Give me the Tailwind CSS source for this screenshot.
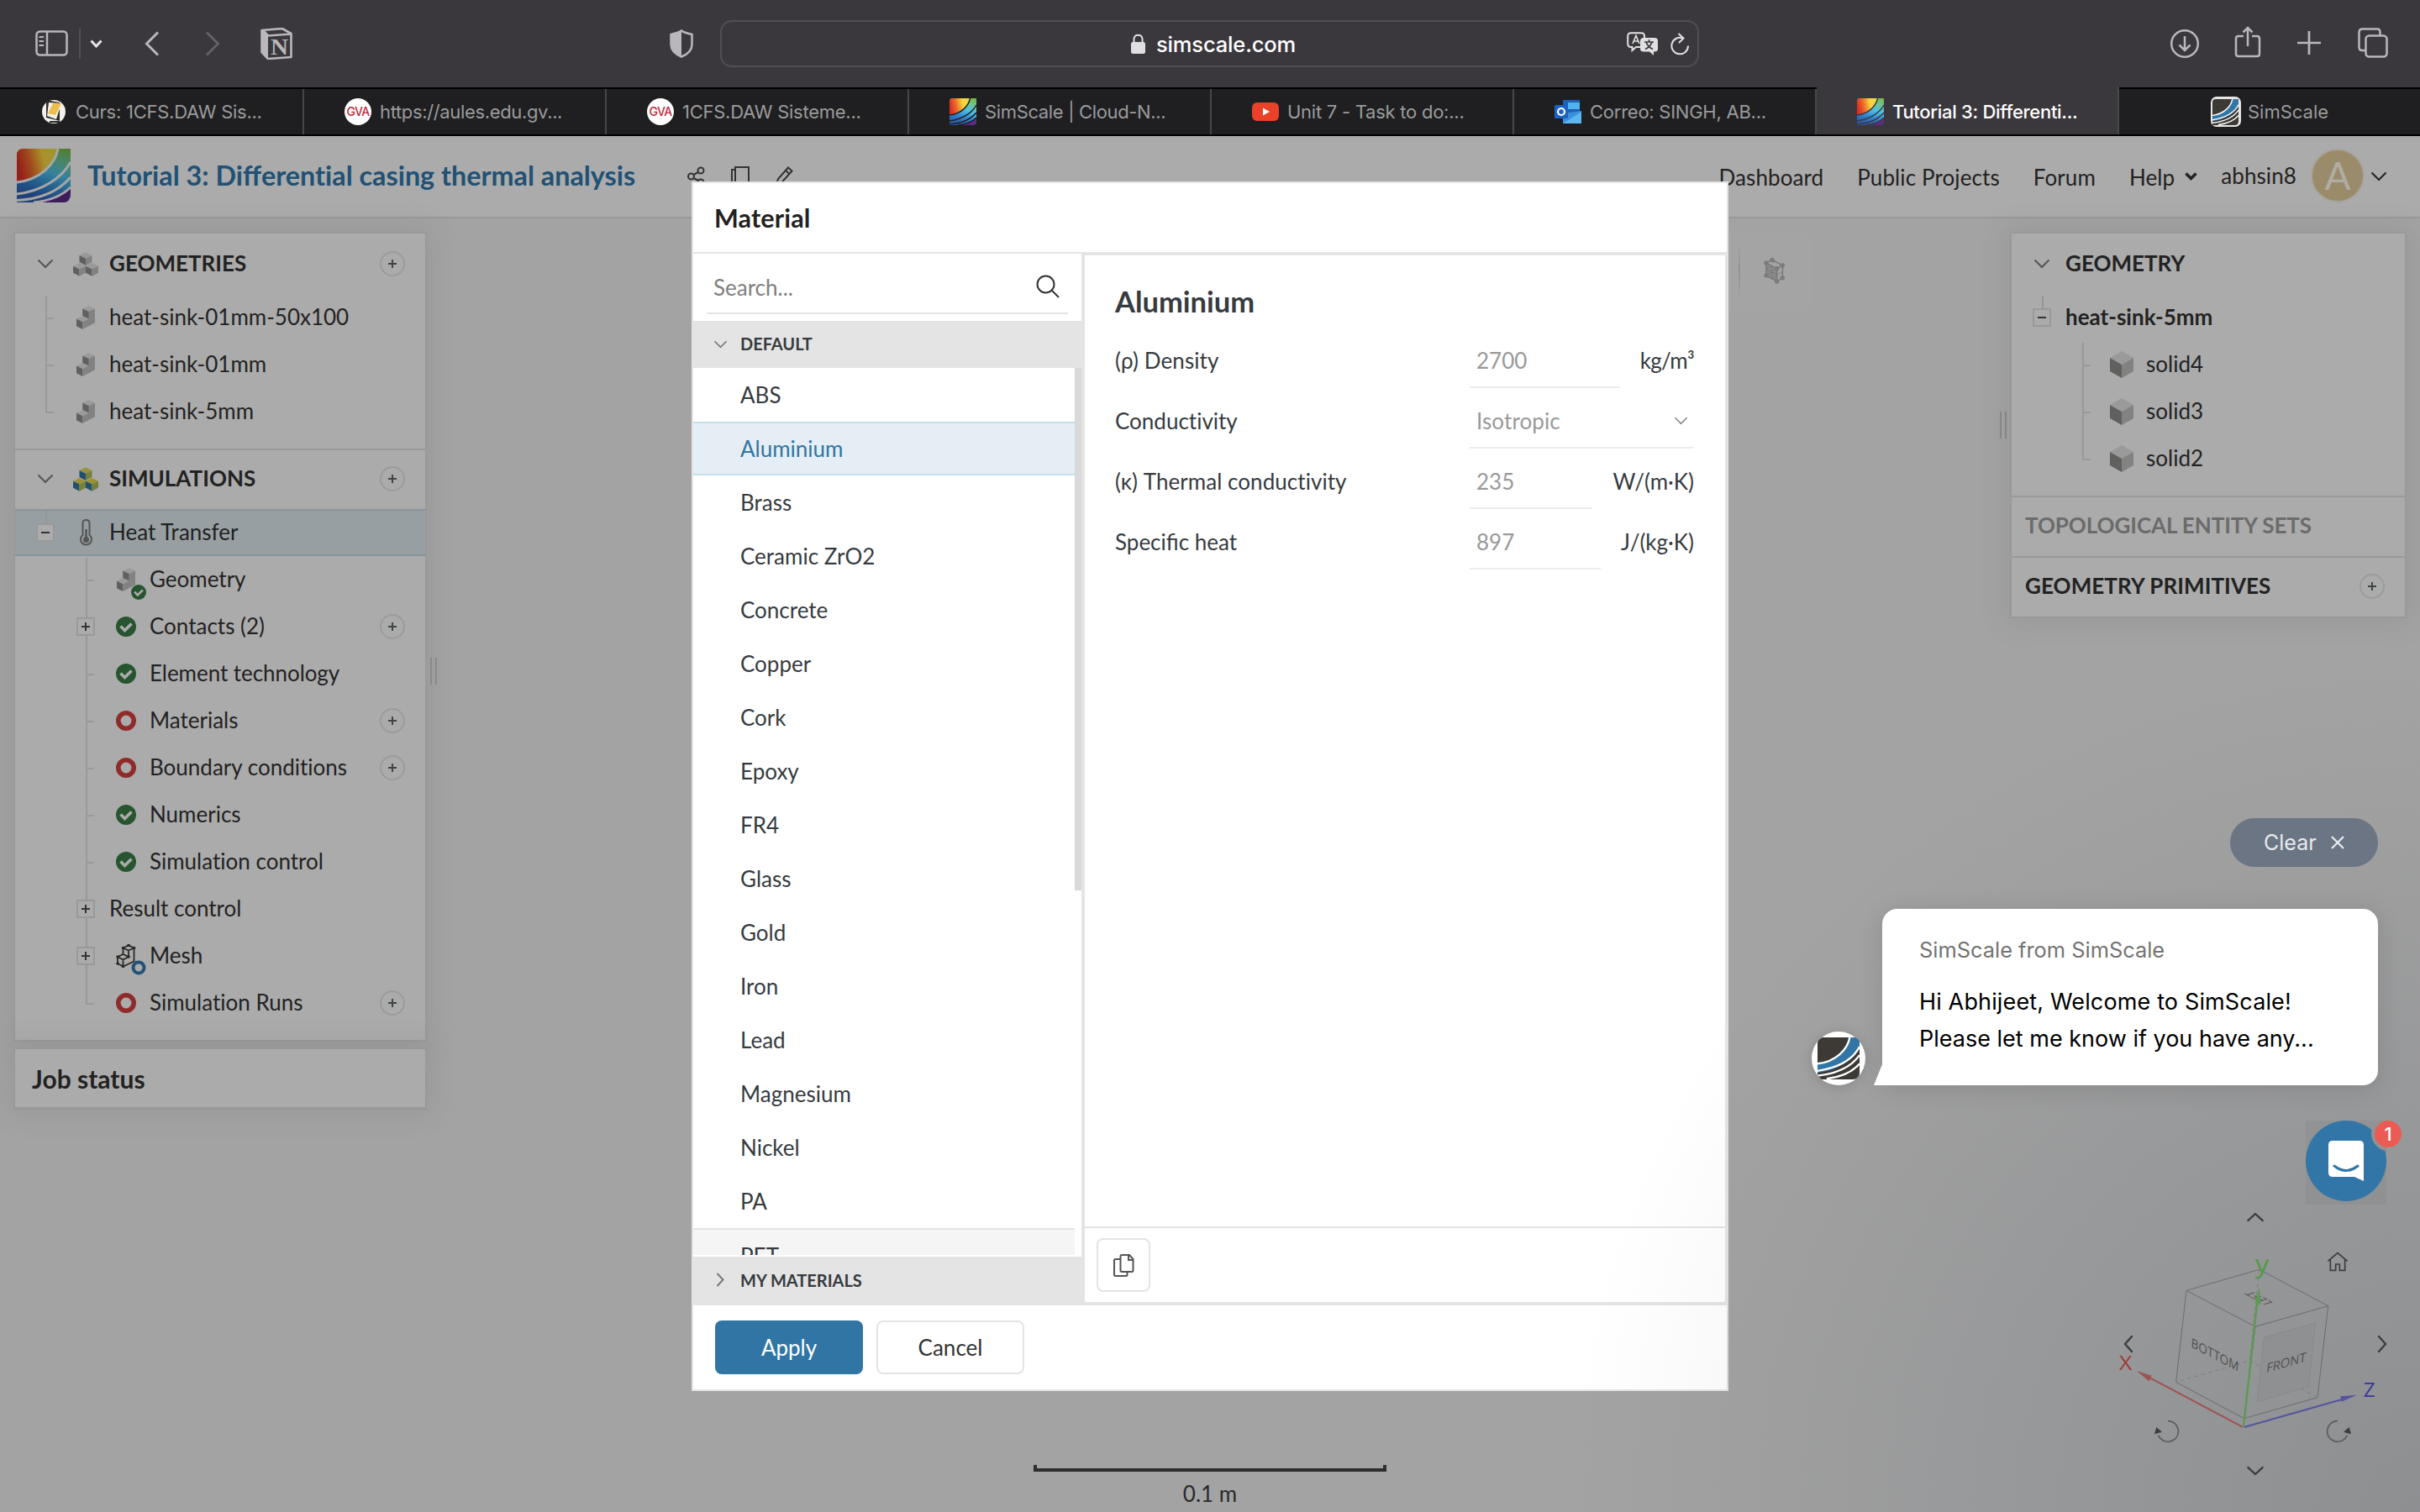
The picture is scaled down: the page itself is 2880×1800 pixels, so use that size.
<!DOCTYPE html>
<html lang="en">
<head>
<meta charset="utf-8">
<title>SimScale</title>
<script src="https://cdn.jsdelivr.net/npm/@tailwindcss/browser@4"></script>
</head>
<body class="w-[2880px] h-[1800px] overflow-hidden bg-[#a3a3a3] font-['Lato',sans-serif] text-[26px] leading-none text-[#222222] [font-variant-ligatures:none]">

<!-- Icon definitions -->
<svg width="0" height="0" class="absolute">
  <defs>
    <linearGradient id="warm" x1="0" y1="0.3" x2="1" y2="0.1"><stop offset="0" stop-color="#dc2f26"/><stop offset=".3" stop-color="#ec6f2a"/><stop offset=".62" stop-color="#f8d53f"/><stop offset="1" stop-color="#e9dc45"/></linearGradient>
    <linearGradient id="cool" x1="0.95" y1="0" x2="0.6" y2="1"><stop offset="0" stop-color="#79b83c"/><stop offset=".25" stop-color="#6cc59a"/><stop offset=".5" stop-color="#4cbfe8"/><stop offset=".8" stop-color="#2f7fc8"/><stop offset="1" stop-color="#2f5fb0"/></linearGradient>
    <clipPath id="logoclip"><path d="M8 0H64V54Q64 64 54 64H0V8Q0 0 8 0Z"/></clipPath>
    <symbol id="rainbow" viewBox="0 0 64 64"><g clip-path="url(#logoclip)"><rect width="64" height="64" fill="url(#cool)"/><path d="M0 0H49C46 18 28 37 0 40Z" fill="url(#warm)"/><path d="M64 46V64H20C40 62 54 56 64 46Z" fill="#5d2a86"/></g>
      <g fill="none" stroke="currentColor" stroke-width="3"><path d="M49 0C46 18 28 37 0 40"/><path d="M64 16C54 34 32 50 0 54"/><path d="M64 34C52 48 32 60 0 61.500"/><path d="M64 46C54 56 40 62 20 64"/></g></symbol>
    <symbol id="darklogo" viewBox="0 0 64 64"><path d="M8 0H64V54Q64 64 54 64H0V8Q0 0 8 0Z" fill="#3d3935"/><path d="M49 0H64V14C54 34 32 50 0 54V40C28 37 46 18 49 0Z" fill="#3276a8"/>
      <g fill="none" stroke="#fff" stroke-width="3"><path d="M49 0C46 18 28 37 0 40"/><path d="M64 14C54 34 32 46 0 51"/><path d="M64 27C52 44 32 55 0 58.500"/><path d="M64 40C54 52 38 60 14 63"/></g></symbol>
    <symbol id="chev" viewBox="0 0 20 12"><path d="M1.500 1.500L10 10L18.500 1.500" fill="none" stroke="currentColor" stroke-width="2"/></symbol>
    <symbol id="cubes3" viewBox="0 0 86 82">
      <g id="c1"><path d="M43 0L64.500 11L43 22L21.500 11Z" class="fill-[#999]"/><path d="M21.500 11L43 22V45L21.500 34Z" class="fill-[#60605e]"/><path d="M64.500 11L43 22V45L64.500 34Z" class="fill-[#828282]"/></g>
      <use href="#c1" x="-21.500" y="36.500"/><use href="#c1" x="21.500" y="36.500"/></symbol>
    <symbol id="cubes3c" viewBox="0 0 86 82">
      <g id="c2"><path d="M43 0L64.500 11L43 22L21.500 11Z" fill="#9a923b"/><path d="M21.500 11L43 22V45L21.500 34Z" fill="#22506f"/><path d="M64.500 11L43 22V45L64.500 34Z" fill="#75813a"/></g>
      <use href="#c2" x="-21.500" y="36.500"/><use href="#c2" x="21.500" y="36.500"/></symbol>
    <symbol id="part" viewBox="0 0 64 81"><path d="M21 10L43 0L64 10L43 20Z" fill="#9b9b9b"/><path d="M0 45L21 35L43 45L21 56Z" fill="#9b9b9b"/><path d="M21 10L43 20V45L21 35Z" fill="#60605e"/><path d="M0 45L21 56V81L0 70Z" fill="#60605e"/><path d="M43 20L64 10V59L21 81V56L43 45Z" fill="#828282"/></symbol>
    <symbol id="solid" viewBox="0 0 84 96"><path d="M42 0L84 24L42 48L0 24Z" fill="#9a9a9a"/><path d="M0 24L42 48V96L0 72Z" fill="#60605e"/><path d="M84 24L42 48V96L84 72Z" fill="#828282"/></symbol>
    <symbol id="ok" viewBox="0 0 24 24"><circle cx="12" cy="12" r="12" fill="#26552f"/><path d="M5.500 11.500L10.500 16.500L18.500 8.500" fill="none" stroke="#ababab" stroke-width="3.600"/></symbol>
    <symbol id="ring" viewBox="0 0 24 24"><circle cx="12" cy="12" r="9.200" fill="none" stroke="currentColor" stroke-width="5.600"/></symbol>
    <symbol id="plus" viewBox="0 0 30 30"><circle cx="15" cy="15" r="14" fill="none" stroke="#999b9d" stroke-width="2"/><path d="M15 10V20M10 15H20" stroke="#3f4447" stroke-width="2"/></symbol>
    <symbol id="tee" viewBox="0 0 24 56"><path d="M12 0V56M12 29H21" stroke="#999" stroke-width="2" fill="none"/></symbol>
    <symbol id="tee1" viewBox="0 0 24 56"><path d="M12 2V56M12 29H21" stroke="#999" stroke-width="2" fill="none"/></symbol>
    <symbol id="ell" viewBox="0 0 24 56"><path d="M12 0V29H21" stroke="#999" stroke-width="2" fill="none"/></symbol>
    <symbol id="boxplus" viewBox="0 0 24 56"><path d="M12 0V56" stroke="#999" stroke-width="2"/><rect x="1" y="18" width="20" height="20" fill="#ababab" stroke="#999" stroke-width="2"/><path d="M11 23V33M6 28H16" stroke="#333" stroke-width="2"/></symbol>
    <symbol id="boxminus" viewBox="0 0 24 56"><path d="M12 2V18" stroke="#8f979b" stroke-width="2"/><rect x="1" y="18" width="20" height="20" fill="#ababab" stroke="#999" stroke-width="2"/><path d="M6 28H16" stroke="#333" stroke-width="2"/></symbol>
  </defs>
</svg>

<div class="flex h-[1800px] w-[2880px] flex-col">

  <!-- Browser toolbar -->
  <div class="flex h-[104px] shrink-0 items-center bg-[#3b383d] text-[#b9b7bb]">
    <svg class="ml-[42px] h-[32px] w-[40px]" viewBox="0 0 40 32" fill="none" stroke="currentColor" stroke-width="2.500"><rect x="1.500" y="1.500" width="36" height="28" rx="4"/><path d="M14 1.500V29.500"/><path d="M4.500 8H10M4.500 13H10M4.500 18H10" stroke-width="2"/></svg>
    <div class="ml-[12px] h-[36px] w-[2px] bg-[#515054]"></div>
    <svg class="ml-[11px] h-[10px] w-[15px] text-[#e4e3e5]" viewBox="0 0 15 10"><path d="M1.500 1.500L7.500 8L13.500 1.500" fill="none" stroke="currentColor" stroke-width="3"/></svg>
    <svg class="ml-[50px] h-[30px] w-[18px]" viewBox="0 0 18 30"><path d="M16 1.500L2.500 15L16 28.500" fill="none" stroke="currentColor" stroke-width="3"/></svg>
    <svg class="ml-[54px] h-[30px] w-[18px] text-[#636165]" viewBox="0 0 18 30"><path d="M2 1.500L15.500 15L2 28.500" fill="none" stroke="currentColor" stroke-width="3"/></svg>
    <svg class="ml-[48px] h-[38px] w-[38px]" viewBox="0 0 38 38"><path d="M1.500 3L26 1L36.500 7V35L9 37L1.500 29Z" fill="none" stroke="currentColor" stroke-width="2.600" stroke-linejoin="round"/><path d="M1.500 3L9 9.500V37L1.500 29Z" fill="currentColor"/><path d="M3 3L9 9.500L36.500 7.500" fill="none" stroke="currentColor" stroke-width="2.600"/><text x="12" y="32" font-family="Liberation Serif, serif" font-weight="700" font-size="27" textLength="21" lengthAdjust="spacingAndGlyphs" fill="currentColor">N</text></svg>
    <svg class="ml-[448px] h-[34px] w-[30px]" viewBox="0 0 30 34"><path d="M15 1.500C18 4 23 5 27.500 6V18C27.500 25 21 30 15 32.500C9 30 2.500 25 2.500 18V6C7 5 12 4 15 1.500Z" fill="none" stroke="currentColor" stroke-width="2.500"/><path d="M15 1.500V32.500C9 30 2.500 25 2.500 18V6C7 5 12 4 15 1.500Z" fill="currentColor"/></svg>
    <div class="ml-[31px] flex h-[56px] w-[1165px] items-center rounded-[14px] border-2 border-[#504e53] font-['Inter',sans-serif] text-white">
      <svg class="ml-[487px] h-[24px] w-[17px] text-[#e0dfe1]" viewBox="0 0 17 24"><rect x="0" y="10" width="17" height="14" rx="2.500" fill="currentColor"/><path d="M3.500 11V6.500C3.500 0 13.500 0 13.500 6.500V11" fill="none" stroke="currentColor" stroke-width="2"/></svg>
      <span class="ml-[13px] w-[165px] pt-[1px] text-[25.500px] font-medium tracking-[-0.15px] whitespace-nowrap">simscale.com</span>
      <svg class="ml-[395px] h-[28px] w-[38px] text-[#e0dfe1]" viewBox="0 0 38 28"><path d="M5 1.200H17Q21 1.200 21 5V14Q21 18 17 18H11L6.500 22V18H5Q1.200 18 1.200 14V5Q1.200 1.200 5 1.200Z" fill="none" stroke="currentColor" stroke-width="2"/><path d="M20 7H33Q37 7 37 11V20Q37 23.500 33 23.500H32V28L27 23.500H20Q16 23.500 16 20V11Q16 7 20 7Z" fill="currentColor"/><path d="M7 14L11 4.500L15 14M8.500 11H13.500" fill="none" stroke="currentColor" stroke-width="1.700"/><path d="M21 12H32M26.500 9V12M23 12Q25 18 31 20.500M30 12Q28 18 22 20.500" fill="none" stroke="#3b383d" stroke-width="1.700"/></svg>
      <svg class="ml-[14px] h-[27px] w-[23px] text-[#e0dfe1]" viewBox="0 0 23 27" fill="none" stroke="currentColor" stroke-width="2"><path d="M15 6.500A9.800 9.800 0 1 0 21 15.500"/><path d="M9.500 1L15.500 6.500L10 12"/></svg>
    </div>
    <div class="ml-[560px] flex items-center">
      <svg class="h-[36px] w-[36px]" viewBox="0 0 36 36" fill="none" stroke="currentColor" stroke-width="2.500"><circle cx="18" cy="18" r="15.800"/><path d="M18 9V26M11.500 19.500L18 26L24.500 19.500"/></svg>
      <svg class="-mt-[4px] ml-[41px] h-[38px] w-[32px]" viewBox="0 0 32 38" fill="none" stroke="currentColor" stroke-width="2.500"><path d="M11 12H5Q2 12 2 15V33Q2 36 5 36H27Q30 36 30 33V15Q30 12 27 12H21"/><path d="M16 24V2M10.500 7.500L16 2L21.500 7.500"/></svg>
      <svg class="-mt-[2px] ml-[43px] h-[28px] w-[28px]" viewBox="0 0 28 28"><path d="M14 0V28M0 14H28" stroke="currentColor" stroke-width="2.700"/></svg>
      <svg class="-mt-[2px] ml-[43px] h-[36px] w-[38px]" viewBox="0 0 38 36" fill="none" stroke="currentColor" stroke-width="2.500"><rect x="10.500" y="9.500" width="25" height="25" rx="4"/><path d="M10 27H6Q2.500 27 2.500 23V5.500Q2.500 1.500 6.500 1.500H24Q27.500 1.500 27.500 5.500V9"/></svg>
    </div>
  </div>

  <!-- Tab strip -->
  <div class="flex h-[58px] shrink-0 border-t-2 border-b-2 border-black bg-[#1f1f21] font-['Inter',sans-serif] text-[22px] tracking-[-0.25px] text-[#9b9b9c]">
    <div class="flex w-[362px] items-center border-r-2 border-[#47474a] pl-[49px] whitespace-nowrap">
      <svg class="h-[30px] w-[30px]" viewBox="0 0 30 30"><circle cx="15" cy="15" r="14" fill="#f3f1ea"/><path d="M6 1L22 4V26L6 22Z" fill="#2c2b2b"/><path d="M9 4L24 5L18 24L7 20Z" fill="#f3f1ea"/><path d="M14 5L24 5L17 19L8 17Z" fill="#ecbf4d"/><path d="M10 27H22" stroke="#2c2b2b" stroke-width="2"/></svg>
      <span class="ml-[11px]">Curs: 1CFS.DAW Sis...</span></div>
    <div class="flex w-[360px] items-center border-r-2 border-[#47474a] pl-[48px] whitespace-nowrap">
      <span class="flex h-[32px] w-[32px] items-center justify-center rounded-full bg-white text-[14px] font-medium tracking-[-0.6px] text-[#c2293c]">GVA</span>
      <span class="ml-[10px] tracking-[-0.35px]">https://aules.edu.gv...</span></div>
    <div class="flex w-[360px] items-center border-r-2 border-[#47474a] pl-[48px] whitespace-nowrap">
      <span class="flex h-[32px] w-[32px] items-center justify-center rounded-full bg-white text-[14px] font-medium tracking-[-0.6px] text-[#c2293c]">GVA</span>
      <span class="ml-[10px]">1CFS.DAW Sisteme...</span></div>
    <div class="flex w-[360px] items-center border-r-2 border-[#47474a] pl-[48px] whitespace-nowrap">
      <svg class="h-[32px] w-[32px] text-[#1f1f21]"><use href="#rainbow"/></svg>
      <span class="ml-[10px] tracking-[-0.35px]">SimScale | Cloud-N...</span></div>
    <div class="flex w-[360px] items-center border-r-2 border-[#47474a] pl-[48px] whitespace-nowrap">
      <svg class="h-[32px] w-[32px]" viewBox="0 0 32 32"><rect y="5" width="32" height="22" rx="6" fill="#ea4128"/><path d="M13 11.500L21 16L13 20.500Z" fill="#fff"/></svg>
      <span class="ml-[10px]">Unit 7 - Task to do:...</span></div>
    <div class="flex w-[360px] items-center border-r-2 border-[#47474a] pl-[48px] whitespace-nowrap">
      <svg class="h-[32px] w-[32px]" viewBox="0 0 32 32"><rect x="10" y="2" width="20" height="22" fill="#1d5fb5"/><rect x="16" y="5" width="14" height="8" fill="#4fb3ef"/><path d="M10 18L32 15V30H10Z" fill="#3b8fdd"/><path d="M10 30L32 16V30Z" fill="#5cb6f0"/><rect y="8" width="16" height="16" rx="1.500" fill="#1c62c4"/><circle cx="8" cy="16" r="4" fill="none" stroke="#fff" stroke-width="2.200"/></svg>
      <span class="ml-[10px]">Correo: SINGH, AB...</span></div>
    <div class="-mt-[2px] flex w-[360px] items-center border-r-2 border-[#47474a] bg-[#3b383d] pt-[2px] pl-[48px] whitespace-nowrap">
      <svg class="h-[32px] w-[32px] text-[#3b383d]"><use href="#rainbow"/></svg>
      <span class="ml-[10px] font-medium tracking-[-0.3px] text-white">Tutorial 3: Differenti...</span></div>
    <div class="flex w-[358px] items-center justify-center whitespace-nowrap">
      <span class="flex h-[36px] w-[36px] items-center justify-center rounded-[7px] bg-[#e6e6e6]"><svg class="h-[31px] w-[31px]"><use href="#darklogo"/></svg></span>
      <span class="ml-[8px] tracking-normal">SimScale</span></div>
  </div>

  <!-- Application -->
  <div class="relative flex grow flex-col">
    <header class="flex h-[98px] shrink-0 items-center border-b-2 border-[#999999] bg-[#ababab] pb-[2px]">
      <svg class="ml-[20px] h-[64px] w-[64px] text-[#f4f4f4] brightness-[0.68]"><use href="#rainbow"/></svg>
      <span class="ml-[20px] w-[653px] text-[32.300px] font-bold whitespace-nowrap text-[#215174]">Tutorial 3: Di<span class="[font-variant-ligatures:normal]">ff</span>erential casing thermal analysis</span>
      <div class="mt-[2px] ml-[61px] flex items-center gap-[30px] text-[#333]">
        <svg class="h-[24px] w-[22px]" viewBox="0 0 22 24" fill="none" stroke="currentColor" stroke-width="2"><circle cx="4.500" cy="12" r="3.500"/><circle cx="16" cy="5" r="3.500"/><circle cx="16" cy="19" r="3.500"/><path d="M7.500 10L13 7M7.500 14L13 17"/></svg>
        <svg class="h-[24px] w-[22px]" viewBox="0 0 22 24" fill="none" stroke="currentColor" stroke-width="2"><path d="M5 1H21V19H5ZM5 4H1V23H16V19"/></svg>
        <svg class="h-[24px] w-[22px]" viewBox="0 0 22 24" fill="none" stroke="currentColor" stroke-width="2"><path d="M2 22L4 15L16 1.500L20.500 5.500L8 19.500ZM13 5L17.500 9"/></svg>
      </div>
      <nav class="ml-auto flex items-center tracking-[0.1px]">
        <span class="pt-[3px]">Dashboard</span><span class="ml-[40px] pt-[3px]">Public Projects</span><span class="ml-[40px] pt-[3px]">Forum</span><span class="ml-[40px] pt-[3px]">Help</span>
        <svg class="mt-[2px] ml-[12px] h-[10px] w-[15px]" viewBox="0 0 15 10"><path d="M1.500 1.500L7.500 7.500L13.500 1.500" fill="none" stroke="currentColor" stroke-width="3.500"/></svg>
        <span class="ml-[28px]">abhsin8</span>
        <span class="ml-[17px] flex h-[64px] w-[64px] items-center justify-center rounded-full border-2 border-[#a7a49c] bg-[#9a8c6a] text-[46px] text-[#b0aca3]">A</span>
        <svg class="mt-[2px] mr-[39px] ml-[7px] h-[12px] w-[20px]"><use href="#chev"/></svg>
      </nav>
    </header>

    <main class="flex grow items-start justify-between px-[16px] pt-[16px]">
      <!-- Left sidebar -->
      <div class="flex items-center">
        <div class="flex flex-col gap-[7px]">
          <section class="h-[964px] w-[492px] border-2 border-[#999999] bg-[#ababab] shadow-[0_0_36px_8px_rgba(0,0,0,0.06)] [&_span]:-translate-x-px [&_span]:-translate-y-px">
            <div class="flex h-[72px] items-center pl-[26px]"><svg class="h-[12px] w-[20px] text-[#555]"><use href="#chev"/></svg><svg class="ml-[23px] h-[29px] w-[30px]"><use href="#cubes3"/></svg><span class="ml-[14px] font-bold">GEOMETRIES</span><svg class="mr-[24px] ml-auto h-[30px] w-[30px]"><use href="#plus"/></svg></div>
            <div class="flex h-[56px] items-center pl-[25px]"><svg class="h-[56px] w-[24px]"><use href="#tee1"/></svg><svg class="ml-[24px] h-[28px] w-[22px]"><use href="#part"/></svg><span class="ml-[18px]">heat-sink-01mm-50x100</span></div>
            <div class="flex h-[56px] items-center pl-[25px]"><svg class="h-[56px] w-[24px]"><use href="#tee"/></svg><svg class="ml-[24px] h-[28px] w-[22px]"><use href="#part"/></svg><span class="ml-[18px]">heat-sink-01mm</span></div>
            <div class="flex h-[56px] items-center pl-[25px]"><svg class="h-[56px] w-[24px]"><use href="#ell"/></svg><svg class="ml-[24px] h-[28px] w-[22px]"><use href="#part"/></svg><span class="ml-[18px]">heat-sink-5mm</span></div>
            <div class="mt-[16px] flex h-[72px] items-center border-t-2 border-[#999999] pb-[2px] pl-[26px]"><svg class="h-[12px] w-[20px] text-[#555]"><use href="#chev"/></svg><svg class="ml-[23px] h-[29px] w-[30px]"><use href="#cubes3c"/></svg><span class="ml-[14px] font-bold">SIMULATIONS</span><svg class="mr-[24px] ml-auto h-[30px] w-[30px]"><use href="#plus"/></svg></div>
            <div class="flex h-[56px] items-center border-y-2 border-[#85959c] bg-[#979fa2] pl-[25px]"><svg class="-my-[2px] h-[56px] w-[24px]"><use href="#boxminus"/></svg>
              <svg class="ml-[28px] h-[32px] w-[15px]" viewBox="0 0 15 32"><path d="M3.500 19V5Q3.500 1 7.500 1T11.500 5V19A6.500 6.500 0 1 1 3.500 19Z" fill="none" stroke="#555" stroke-width="2"/><circle cx="7.500" cy="24.500" r="3.500" fill="#555"/><path d="M7.500 12V24" stroke="#555" stroke-width="2.500"/></svg>
              <span class="ml-[21px]">Heat Transfer</span></div>
            <div class="flex h-[56px] items-center pl-[73px]"><svg class="h-[56px] w-[24px]"><use href="#tee1"/></svg><div class="relative ml-[24px] h-[28px] w-[22px]"><svg class="h-[28px] w-[22px]"><use href="#part"/></svg><svg class="absolute top-[20px] left-[17px] h-[18px] w-[18px]"><use href="#ok"/></svg></div><span class="ml-[18px]">Geometry</span></div>
            <div class="flex h-[56px] items-center pl-[73px]"><svg class="h-[56px] w-[24px]"><use href="#boxplus"/></svg><svg class="ml-[23px] h-[24px] w-[24px]"><use href="#ok"/></svg><span class="ml-[17px]">Contacts (2)</span><svg class="mr-[24px] ml-auto h-[30px] w-[30px]"><use href="#plus"/></svg></div>
            <div class="flex h-[56px] items-center pl-[73px]"><svg class="h-[56px] w-[24px]"><use href="#tee"/></svg><svg class="ml-[23px] h-[24px] w-[24px]"><use href="#ok"/></svg><span class="ml-[17px] tracking-[-0.05px]">Element technology</span></div>
            <div class="flex h-[56px] items-center pl-[73px]"><svg class="h-[56px] w-[24px]"><use href="#tee"/></svg><svg class="ml-[23px] h-[24px] w-[24px] text-[#8f2b2b]"><use href="#ring"/></svg><span class="ml-[17px]">Materials</span><svg class="mr-[24px] ml-auto h-[30px] w-[30px]"><use href="#plus"/></svg></div>
            <div class="flex h-[56px] items-center pl-[73px]"><svg class="h-[56px] w-[24px]"><use href="#tee"/></svg><svg class="ml-[23px] h-[24px] w-[24px] text-[#8f2b2b]"><use href="#ring"/></svg><span class="ml-[17px]">Boundary conditions</span><svg class="mr-[24px] ml-auto h-[30px] w-[30px]"><use href="#plus"/></svg></div>
            <div class="flex h-[56px] items-center pl-[73px]"><svg class="h-[56px] w-[24px]"><use href="#tee"/></svg><svg class="ml-[23px] h-[24px] w-[24px]"><use href="#ok"/></svg><span class="ml-[17px]">Numerics</span></div>
            <div class="flex h-[56px] items-center pl-[73px]"><svg class="h-[56px] w-[24px]"><use href="#tee"/></svg><svg class="ml-[23px] h-[24px] w-[24px]"><use href="#ok"/></svg><span class="ml-[17px]">Simulation control</span></div>
            <div class="flex h-[56px] items-center pl-[73px]"><svg class="h-[56px] w-[24px]"><use href="#boxplus"/></svg><span class="ml-[16px]">Result control</span></div>
            <div class="flex h-[56px] items-center pl-[73px]"><svg class="h-[56px] w-[24px]"><use href="#boxplus"/></svg>
              <div class="relative ml-[23px] h-[28px] w-[24px]"><svg class="h-[28px] w-[24px]" viewBox="0 0 24 28" fill="none" stroke="#2a2926" stroke-width="1.800"><path d="M8.500 4.500L15 1.500L21.500 4.500L15 7.500ZM8.500 4.500V12M15 7.500V15M21.500 4.500V20.500L8.500 26.500L2 23V15L8.500 12L15 15L8.500 18.500L2 15M8.500 18.500V26.500"/><path d="M8.500 4.500h.1M15 1.500h.1M21.500 4.500h.1M2 15h.1M2 23h.1M8.500 26.500h.1M15 15h.1" stroke-width="3.600" stroke-linecap="round"/></svg>
              <svg class="absolute top-[19px] left-[18px] h-[18px] w-[18px] text-[#22527a]" viewBox="0 0 18 18"><circle cx="9" cy="9" r="6.500" fill="#ababab" stroke="currentColor" stroke-width="4"/></svg></div><span class="ml-[17px]">Mesh</span></div>
            <div class="flex h-[56px] items-center pl-[73px]"><svg class="h-[56px] w-[24px]"><use href="#ell"/></svg><svg class="ml-[23px] h-[24px] w-[24px] text-[#8f2b2b]"><use href="#ring"/></svg><span class="ml-[17px]">Simulation Runs</span><svg class="mr-[24px] ml-auto h-[30px] w-[30px]"><use href="#plus"/></svg></div>
          </section>
          <section class="flex h-[75px] w-[492px] items-center border-2 border-b-4 border-[#999999] bg-[#ababab] pl-[20px] text-[30px] font-bold shadow-[0_0_36px_8px_rgba(0,0,0,0.06)]">Job status</section>
        </div>
        <div class="ml-[4px] h-[32px] w-[8px] border-x-2 border-[#8a8a8a]"></div>
      </div>

      <!-- Right sidebar -->
      <div class="flex items-center">
        <div class="mr-[4px] h-[32px] w-[8px] border-x-2 border-[#8a8a8a]"></div>
        <section class="h-[460px] w-[472px] border-2 border-[#999999] bg-[#ababab] shadow-[0_0_36px_8px_rgba(0,0,0,0.06)] [&_span]:-translate-y-px">
          <div class="flex h-[72px] items-center pl-[26px]"><svg class="h-[12px] w-[20px] text-[#555]"><use href="#chev"/></svg><span class="ml-[18px] font-bold">GEOMETRY</span></div>
          <div class="flex h-[56px] items-center pl-[25px]"><svg class="h-[56px] w-[24px]"><use href="#boxminus"/></svg><span class="ml-[15px] font-bold">heat-sink-5mm</span></div>
          <div class="flex h-[56px] items-center pl-[73px]"><svg class="h-[56px] w-[24px]"><use href="#tee1"/></svg><svg class="ml-[20px] h-[32px] w-[28px]"><use href="#solid"/></svg><span class="ml-[15px]">solid4</span></div>
          <div class="flex h-[56px] items-center pl-[73px]"><svg class="h-[56px] w-[24px]"><use href="#tee"/></svg><svg class="ml-[20px] h-[32px] w-[28px]"><use href="#solid"/></svg><span class="ml-[15px]">solid3</span></div>
          <div class="flex h-[56px] items-center pl-[73px]"><svg class="h-[56px] w-[24px]"><use href="#ell"/></svg><svg class="ml-[20px] h-[32px] w-[28px]"><use href="#solid"/></svg><span class="ml-[15px]">solid2</span></div>
          <div class="mt-[16px] flex h-[72px] items-center border-t-2 border-[#999999] pb-[2px] pl-[16px] font-bold text-[#6b6b6b]"><span class="tracking-[-0.08px]">TOPOLOGICAL ENTITY SETS</span></div>
          <div class="flex h-[72px] items-center border-t-2 border-[#999999] pb-[2px] pl-[16px] font-bold"><span class="tracking-[0.08px]">GEOMETRY PRIMITIVES</span><svg class="mr-[24px] ml-auto h-[30px] w-[30px]"><use href="#plus"/></svg></div>
        </section>
      </div>
    </main>
  </div>
</div>

<!-- Viewer toolbar -->
<div class="absolute top-[276px] left-[2040px] flex h-[94px] w-[117px] items-center rounded-[10px] bg-[#a4a4a4] pl-[29px]">
  <div class="h-[68px] w-[2px] bg-linear-to-b from-[#a4a4a4] via-[#919191] to-[#a4a4a4]"></div>
  <svg class="-mt-[3px] ml-[26px] h-[34px] w-[28px] text-[#7b7b7b]" viewBox="0 0 84 102" fill="none" stroke="currentColor" stroke-width="5"><path d="M15 24L53 44V90L15 69Z" fill="#8c8c8c"/><path d="M15 24L36 13L73 33L53 44M73 33V77L53 90"/><path d="M34 34V80M15 46L53 67M15 69L53 44M15 46L34 34M34 80L53 67M53 67L73 55M36 24L50 17" stroke-width="3"/><g fill="currentColor" stroke="none"><circle cx="15" cy="24" r="8"/><circle cx="36" cy="13" r="8"/><circle cx="73" cy="33" r="8"/><circle cx="53" cy="44" r="8"/><circle cx="15" cy="69" r="8"/><circle cx="53" cy="90" r="8"/><circle cx="73" cy="77" r="8"/></g></svg>
</div>

<!-- Scale bar -->
<div class="absolute top-[1744px] left-[1230px] flex w-[420px] flex-col items-center">
  <div class="h-[8px] w-full border-x-4 border-b-4 border-[#2e2e2e]"></div>
  <span class="mt-[13px] text-[#2a2a2a]">0.1 m</span>
</div>

<!-- Material dialog -->
<div class="absolute top-[216px] left-[823px] flex h-[1440px] w-[1234px] flex-col border-2 border-[#e4e4e4] bg-white text-[#363b3f]">
  <div class="flex h-[84px] shrink-0 items-center border-b-2 border-[#e4e4e4] pl-[25px] text-[30.500px] font-bold tracking-[0.15px] text-[#222]">Material</div>
  <div class="flex h-[1252px] shrink-0">
    <div class="flex w-[462px] flex-col">
      <div class="mx-[16px] flex h-[72px] shrink-0 items-center border-b-2 border-[#e4e4e4] pl-[8px] text-[#808080]"><span class="pt-[10px]">Search...</span>
        <svg class="mr-[10px] ml-auto mt-[8px] h-[28px] w-[28px]" viewBox="0 0 28 28" fill="none" stroke="#333" stroke-width="2"><circle cx="11.500" cy="11.500" r="10"/><path d="M18.500 18.500L27 27"/></svg></div>
      <div class="mt-[8px] flex h-[56px] shrink-0 items-center bg-[#e4e4e4] pl-[24px] text-[20px] font-bold"><svg class="h-[10px] w-[17px] text-[#777]"><use href="#chev"/></svg><span class="ml-[15px] -translate-y-px">DEFAULT</span></div>
      <div class="flex h-[1056px] shrink-0 justify-between overflow-hidden">
        <div class="w-[454px] *:flex *:h-[64px] *:items-center *:pb-[1px] *:pl-[56px]">
          <div>ABS</div>
          <div class="border-y-2 border-[#c2dfeb] bg-[#e4eef4] text-[#3175a5]">Aluminium</div>
          <div>Brass</div><div>Ceramic ZrO2</div><div>Concrete</div><div>Copper</div><div>Cork</div><div>Epoxy</div><div>FR4</div><div>Glass</div><div>Gold</div><div>Iron</div><div>Lead</div><div>Magnesium</div><div>Nickel</div><div>PA</div>
          <div class="border-t-2 border-[#e4e4e4] bg-[#f5f5f5]">PET</div>
        </div>
        <div class="h-[622px] w-[8px] bg-[#d9d9d9]"></div>
      </div>
      <div class="flex h-[60px] shrink-0 items-center border-t-2 border-white bg-[#e4e4e4] pb-[3px] pl-[27px] text-[20px] font-bold"><svg class="h-[17px] w-[10px] text-[#777]" viewBox="0 0 10 17"><path d="M1.500 1L8.500 8.500L1.500 16" fill="none" stroke="currentColor" stroke-width="2"/></svg><span class="ml-[19px]">MY MATERIALS</span></div>
    </div>
    <div class="flex w-[768px] flex-col border-2 border-b-4 border-l-4 border-[#e4e4e4]">
      <div class="grow pr-[37px] pl-[36px]">
        <h2 class="mt-[35px] mb-[19px] text-[34.500px] leading-[40px] font-bold">Aluminium</h2>
        <div class="flex h-[72px] items-start"><span class="w-[422px] pt-[18px] tracking-[0.1px]">(ρ) Density</span><span class="h-[64px] grow border-b-2 border-[#ececec] pt-[18px] pl-[8px] text-[#999]">2700</span><span class="ml-[24px] pt-[18px] tracking-[-0.7px]">kg/m³</span></div>
        <div class="flex h-[72px] items-start"><span class="w-[422px] pt-[18px]">Conductivity</span><span class="flex h-[64px] grow justify-between border-b-2 border-[#ececec] pt-[18px] pr-[7px] pl-[8px] tracking-[0.1px] text-[#999]">Isotropic<svg class="mt-[8px] h-[10px] w-[17px] text-[#888]"><use href="#chev"/></svg></span></div>
        <div class="flex h-[72px] items-start"><span class="w-[422px] pt-[18px] tracking-[0.05px]">(κ) Thermal conductivity</span><span class="h-[64px] grow border-b-2 border-[#ececec] pt-[18px] pl-[8px] text-[#999]">235</span><span class="ml-[25px] pt-[18px]">W/(m·K)</span></div>
        <div class="flex h-[72px] items-start"><span class="w-[422px] pt-[18px] [font-variant-ligatures:normal]">Specific heat</span><span class="h-[64px] grow border-b-2 border-[#ececec] pt-[18px] pl-[8px] text-[#999]">897</span><span class="ml-[24px] pt-[18px]">J/(kg·K)</span></div>
      </div>
      <div class="flex h-[90px] shrink-0 items-center border-t-2 border-[#e4e4e4] pl-[14px]">
        <div class="flex h-[64px] w-[64px] items-center justify-center rounded-[8px] border-2 border-[#e4e4e4]"><svg class="h-[27px] w-[25px]" viewBox="0 0 25 27" fill="none" stroke="#555" stroke-width="2"><path d="M10 1H19L23.500 6V19.500Q23.500 21 22 21H10Q8.500 21 8.500 19.500V2.500Q8.500 1 10 1ZM18 1V7H23.500"/><path d="M8.500 6H2.500Q1 6 1 7.500V24.500Q1 26 2.500 26H15Q16.500 26 16.500 24.500V21"/></svg></div>
      </div>
    </div>
  </div>
  <div class="flex grow items-center gap-[16px] pl-[26px]">
    <div class="flex h-[64px] w-[176px] items-center justify-center rounded-[8px] bg-[#3175a5] pb-[1px] text-white">Apply</div>
    <div class="flex h-[64px] w-[176px] items-center justify-center rounded-[8px] border-2 border-[#e4e4e4] pb-[1px] text-[#333]">Cancel</div>
  </div>
</div>

<!-- Messenger backdrop -->
<div class="absolute top-[800px] left-[1880px] h-[1000px] w-[1000px] bg-[radial-gradient(ellipse_at_bottom_right,rgba(29,39,54,0.16)_0%,rgba(29,39,54,0)_72%)]"></div>

<!-- Orientation cube -->
<svg class="absolute top-[1410px] left-[2480px] h-[390px] w-[400px]" viewBox="0 0 1200 1170" fill="none">
  <g stroke="#3c3d3f" stroke-width="7"><path d="M584 131L612 105L640 131"/><path d="M584 1009L612 1035L640 1009"/><path d="M173 541L147 570L173 599"/><path d="M1051 541L1077 570L1051 599"/></g>
  <path d="M871 274L906 245L941 274M880 268V307H899V285H913V307H932V268" stroke="#3c3d3f" stroke-width="5"/>
  <path d="M626 304L592 630L329 706M592 630L834 761" stroke="#7d7e80" stroke-width="3" stroke-dasharray="14 12"/>
  <path d="M643 547L827 495L802 722L619 776Z" fill="#8f9092" stroke="#88898b" stroke-width="3"/>
  <g stroke="#6b6c6e" stroke-width="3"><path d="M366 379L626 304L872 434L612 508ZM366 379L329 706L572 836L612 508M572 836L834 761L872 434"/></g>
  <g font-family="Open Sans, sans-serif" font-size="48" fill="#505153">
    <text transform="matrix(.84 .44 -.07 .95 382 580)" textLength="202" lengthAdjust="spacingAndGlyphs">BOTTOM</text>
    <text transform="matrix(.93 -.27 -.1 .95 650 673)" textLength="152" lengthAdjust="spacingAndGlyphs">FRONT</text>
    <text transform="matrix(-.87 -.48 .86 -.26 677 423)" textLength="88" lengthAdjust="spacingAndGlyphs">LEFT</text>
  </g>
  <path d="M566 866L215 680" stroke="#9d5353" stroke-width="6"/><path d="M188 666L242 683L232 703Z" fill="#9d5353"/>
  <path d="M572 867L940 763" stroke="#54549f" stroke-width="6"/><path d="M974 752L916 757L920 776Z" fill="#54549f"/>
  <path d="M570 864L620 410" stroke="#5c9a54" stroke-width="7"/><path d="M626 366L611 427L631 429Z" fill="#5c9a54"/>
  <g font-family="Open Sans, sans-serif" font-weight="500"><text x="126" y="664" font-size="72" textLength="46" lengthAdjust="spacingAndGlyphs" fill="#9c3c37">X</text><text x="611" y="316" font-size="90" textLength="50" lengthAdjust="spacingAndGlyphs" fill="#529a44">y</text><text x="998" y="759" font-size="70" textLength="42" lengthAdjust="spacingAndGlyphs" fill="#3b3899">Z</text></g>
  <g stroke="#5d5e60" stroke-width="5"><path d="M300 845A37 37 0 1 1 266 896"/><path d="M906 845A37 37 0 1 0 940 896"/></g>
  <path d="M259 867L279 884L252 892ZM947 867L927 884L954 892Z" fill="#3c3d3f"/>
</svg>

<!-- Messenger -->
<div class="absolute top-[974px] left-[2654px] flex h-[58px] w-[176px] items-center rounded-full bg-[#6b7583] pl-[40px] font-['Inter',sans-serif] text-[25px] text-[#e8eaec]">Clear<svg class="ml-auto mr-[40px] h-[16px] w-[16px]" viewBox="0 0 16 16"><path d="M1 1L15 15M15 1L1 15" stroke="currentColor" stroke-width="2.300"/></svg></div>
<div class="absolute top-[1228px] left-[2156px] flex h-[64px] w-[64px] items-center justify-center overflow-hidden rounded-full bg-white shadow-[0_2px_16px_rgba(0,0,0,0.15)]"><svg class="h-[50px] w-[50px]"><use href="#darklogo"/></svg></div>
<div class="absolute top-[1082px] left-[2240px] h-[210px] w-[590px] rounded-[18px] rounded-bl-none bg-white pt-[32px] pl-[44px] font-['Inter',sans-serif] whitespace-nowrap shadow-[0_4px_30px_rgba(0,0,0,0.12)]">
  <p class="text-[25.400px] leading-[34px] text-[#737373]">SimScale from SimScale</p>
  <p class="mt-[23px] text-[27px] leading-[44px] text-black"><span class="tracking-[0.14px]">Hi Abhijeet, Welcome to SimScale!</span><br>Please let me know if you have any...</p>
  <svg class="absolute bottom-0 -left-[10px] h-[30px] w-[12px]" viewBox="0 0 12 30"><path d="M12 0L0 30H12Z" fill="#fff"/></svg>
</div>
<div class="absolute top-[1334px] left-[2744px] h-[100px] w-[96px] bg-black/4">
  <svg class="h-[96px] w-[116px] max-w-none" viewBox="0 0 116 96"><circle cx="48" cy="48" r="48" fill="#3276a8"/><path d="M78.800 10A20.500 20.500 0 0 0 95.500 36A48 48 0 0 0 78.800 10Z" fill="#919191"/><path d="M32 24H64Q69 24 69 29V72L58 67H32Q27 67 27 62V29Q27 24 32 24Z" fill="#fff"/><path d="M34 54Q48 65 62 54" fill="none" stroke="#3276a8" stroke-width="3" stroke-linecap="round"/></svg>
  <span class="absolute top-0 left-[82px] flex h-[32px] w-[32px] items-center justify-center rounded-full bg-[#ec5b53] font-['Inter',sans-serif] text-[22px] font-medium text-white">1</span>
</div>

</body>
</html>
